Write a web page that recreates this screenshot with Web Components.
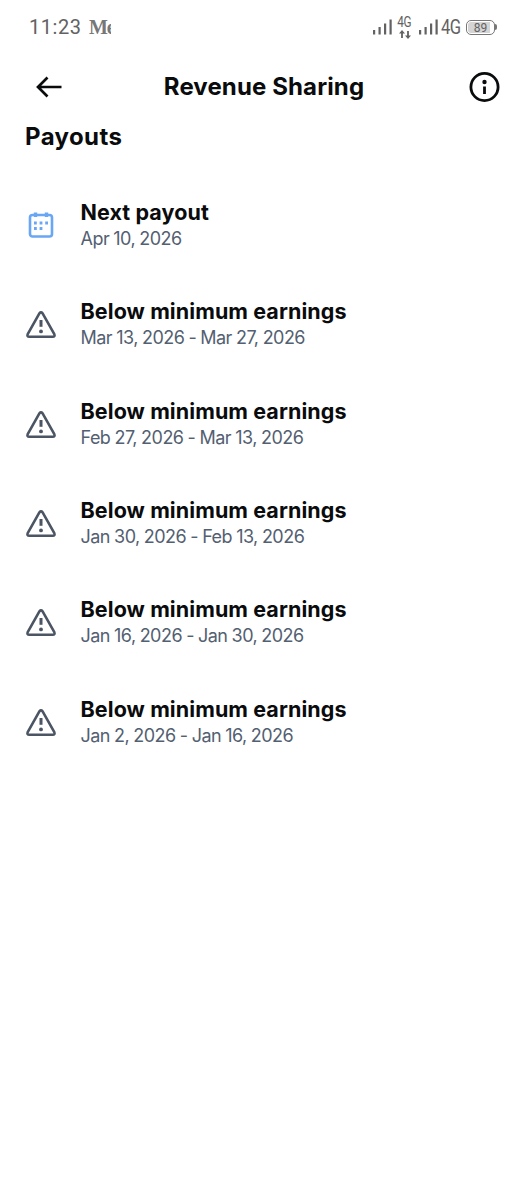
<!DOCTYPE html>
<html lang="en">
<head>
<meta charset="utf-8">
<title>Revenue Sharing</title>
<style>
  body {
    margin: 0;
    background: #fff;
    color: #0a0b0d;
    font-family: Inter, "Liberation Sans", sans-serif;
  }
</style>
</head>
<body>
<revenue-screen></revenue-screen>

<script>
// Phone status bar: clock, notification, signal and battery
class StatusBar extends HTMLElement {
  constructor() {
    super();
    this.attachShadow({ mode: 'open' });
    this.shadowRoot.innerHTML = `
      <style>
        :host {
          display: flex;
          justify-content: space-between;
          align-items: center;
          height: 54px;
          padding: 0 30px 0 29px;
          box-sizing: border-box;
          color: #626262;
          font-family: Roboto, sans-serif;
        }

        .left, .right {
          display: flex;
          align-items: center;
        }

        .time {
          font-size: 20px;
          line-height: 24px;
          letter-spacing: 0.55px;
          width: 60px;
        }

        .note {
          width: 22px;
          overflow: hidden;
          white-space: nowrap;
          font: bold 20px/24px "Liberation Serif", serif;
          letter-spacing: -1.2px;
          color: #777;
        }

        .data {
          display: flex;
          flex-direction: column;
          align-items: center;
          width: 15px;
          height: 25px;
          margin: 0 7px 0 5px;
        }

        .small {
          font-size: 14px;
          line-height: 15px;
          letter-spacing: -0.6px;
          transform: scaleX(0.84);
        }

        .net {
          font-size: 20px;
          line-height: 24px;
          letter-spacing: -0.8px;
          margin: 0 5px 0 3px;
          transform: scaleX(0.83);
          transform-origin: left;
          width: 20px;
        }

        .battery {
          display: flex;
          align-items: center;
        }

        .cell {
          box-sizing: border-box;
          width: 29px;
          height: 15px;
          padding: 1px;
          border: 1.5px solid #777;
          border-radius: 5px;
        }

        .level {
          height: 100%;
          border-radius: 3px;
          background: linear-gradient(90deg, #d4d4d4 89%, #fff 89%);
          font-size: 12px;
          line-height: 12px;
          text-align: center;
        }

        .nub {
          width: 2px;
          height: 6px;
          background: #777;
          border-radius: 0 2px 2px 0;
        }

        svg { display: block; fill: currentColor; }
      </style>
      <div class="left">
        <span class="time">11:23</span>
        <span class="note">Me</span>
      </div>
      <div class="right">
        <svg width="19" height="16" viewBox="0 0 19 16"><path d="M0 11h2.200v4.500H0zM5.500 8h2.200v7.500H5.500zM11 4.500h2.200v11H11zM16.500 .5h2.200v15h-2.200z"/></svg>
        <div class="data">
          <span class="small">4G</span>
          <svg width="12" height="9" viewBox="0 0 12 9"><path d="M3 0l3 3.500H3.900V8H2.100V3.500H0zM9 9L6 5.500h2.100V1h1.800v4.500H12z"/></svg>
        </div>
        <svg width="19" height="16" viewBox="0 0 19 16"><path d="M0 11h2.200v4.500H0zM5.500 8h2.200v7.500H5.500zM11 4.500h2.200v11H11zM16.500 .5h2.200v15h-2.200z"/></svg>
        <span class="net">4G</span>
        <div class="battery">
          <div class="cell"><div class="level">89</div></div>
          <div class="nub"></div>
        </div>
      </div>
    `;
  }
}

// Title bar with back and info buttons
class NavBar extends HTMLElement {
  constructor() {
    super();
    this.attachShadow({ mode: 'open' });
    this.shadowRoot.innerHTML = `
      <style>
        :host {
          display: grid;
          grid-template-columns: 32px 1fr 32px;
          align-items: center;
          height: 66px;
          padding: 0 26px 0 33px;
          box-sizing: border-box;
        }

        h1 {
          margin: 0 0 0 -6px;
          text-align: center;
          font-size: 24px;
          font-weight: 700;
          line-height: 30px;
          letter-spacing: 0.12px;
        }

        svg {
          display: block;
          fill: none;
          stroke: currentColor;
        }
      </style>
      <svg width="32" height="32" viewBox="0 0 32 32" stroke-width="2.7"><path d="M28.500 16H5M14.500 6.500L5 16L14.500 25.500"/></svg>
      <h1><slot></slot></h1>
      <svg width="32" height="32" viewBox="0 0 32 32" stroke-width="2.8"><circle cx="15.500" cy="16" r="13.600"/><path d="M15.500 15.500v7.500"/><circle cx="15.500" cy="11" r="2.200" fill="currentColor" stroke="none"/></svg>
    `;
  }
}

// One payout period; icon is "calendar" or "warning"
class PayoutRow extends HTMLElement {
  constructor() {
    super();
    this.attachShadow({ mode: 'open' });
    this.shadowRoot.innerHTML = `
      <style>
        :host {
          display: flex;
          align-items: center;
          gap: 23.5px;
          height: 52px;
        }

        svg {
          display: block;
          flex: none;
          fill: none;
          stroke: #4b5563;
          stroke-width: 2.6;
          stroke-linejoin: round;
        }

        .calendar { stroke: #69a7f5; }

        .title {
          font-size: 21.5px;
          font-weight: 700;
          line-height: 27px;
          letter-spacing: 0.09px;
        }

        .date {
          color: #536071;
          font-size: 18px;
          line-height: 25px;
          letter-spacing: -0.53px;
          word-spacing: -0.4px;
        }
      </style>
      <span class="icon"></span>
      <div>
        <div class="title"><slot></slot></div>
        <div class="date"><slot name="date"></slot></div>
      </div>
    `;
  }

  connectedCallback() {
    const icons = {
      calendar: '<svg class="calendar" width="32" height="32" viewBox="0 0 32 32"><rect x="5" y="6" width="22" height="21.500" rx="2.500"/><path stroke-width="3.400" d="M10.500 3.500V8M21.500 3.500V8"/><path stroke-width="2.800" d="M9 14h2.800M14.600 14h2.800M20.200 14H23M9 19.500h2.800M14.600 19.500h2.800"/></svg>',
      warning: '<svg width="32" height="32" viewBox="0 0 32 32"><path d="M14.400 5.300L2.700 26.100Q1.700 28.800 4.300 28.800H27.700Q30.300 28.800 29.300 26.100L17.600 5.300Q16 3.500 14.400 5.300Z"/><path d="M16 12v6.800" stroke-width="3"/><circle cx="16" cy="23.400" r="1.900" fill="#4b5563" stroke="none"/></svg>',
    };
    this.shadowRoot.querySelector('.icon').innerHTML = icons[this.getAttribute('icon')];
  }
}

class RevenueScreen extends HTMLElement {
  constructor() {
    super();
    this.attachShadow({ mode: 'open' });
    this.shadowRoot.innerHTML = `
      <style>
        :host {
          display: block;
          min-height: 1200px;
        }

        h2 {
          margin: 2px 25px 0;
          font-size: 24px;
          font-weight: 700;
          line-height: 30px;
          letter-spacing: 0.4px;
        }

        .list {
          display: flex;
          flex-direction: column;
          gap: 47.4px;
          padding: 46.8px 25px 0;
        }
      </style>
      <status-bar></status-bar>
      <nav-bar>Revenue Sharing</nav-bar>
      <h2>Payouts</h2>
      <div class="list"></div>
    `;
  }

  connectedCallback() {
    const below = 'Below minimum earnings';
    const payouts = [
      ['calendar', 'Next payout', 'Apr 10, 2026'],
      ['warning', below, 'Mar 13, 2026 - Mar 27, 2026'],
      ['warning', below, 'Feb 27, 2026 - Mar 13, 2026'],
      ['warning', below, 'Jan 30, 2026 - Feb 13, 2026'],
      ['warning', below, 'Jan 16, 2026 - Jan 30, 2026'],
      ['warning', below, 'Jan 2, 2026 - Jan 16, 2026'],
    ];
    this.shadowRoot.querySelector('.list').innerHTML = payouts.map(([icon, title, date]) => `
      <payout-row icon="${icon}">${title}<span slot="date">${date}</span></payout-row>
    `).join('');
  }
}

customElements.define('status-bar', StatusBar);
customElements.define('nav-bar', NavBar);
customElements.define('payout-row', PayoutRow);
customElements.define('revenue-screen', RevenueScreen);
</script>
</body>
</html>
